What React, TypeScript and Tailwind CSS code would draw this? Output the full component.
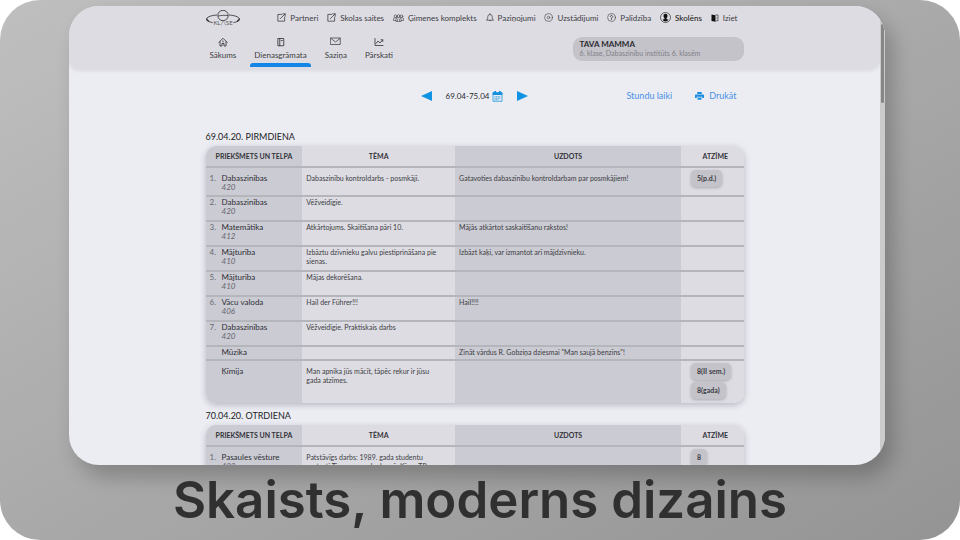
import type { ReactNode } from "react";

const stroke = {
  fill: "none",
  stroke: "currentColor",
  strokeLinecap: "round" as const,
  strokeLinejoin: "round" as const,
};

function ExternalIcon() {
  return (
    <svg viewBox="0 0 16 16" className="size-[9px]" strokeWidth="1.4" {...stroke}>
      <path d="M8 2.5H1.5v12h12V8M6 10l8.5-8.5M10 1.5h4.5V6" />
    </svg>
  );
}

function FamilyIcon() {
  return (
    <svg viewBox="0 0 22 16" className="h-2 w-[11px]" strokeWidth="1.2" {...stroke}>
      <circle cx="5" cy="4.5" r="2.6" />
      <circle cx="11" cy="4" r="2.8" />
      <circle cx="17" cy="4.5" r="2.6" />
      <path d="M6 14.5V11q0-3.500 3-3.500h4q3 0 3 3.500v3.500zM5.500 13H1v-3q0-2.500 2.500-2.500h3M16.500 13H21v-3q0-2.500-2.500-2.500h-3M9 11v3M13 11v3" />
    </svg>
  );
}

function BellIcon() {
  return (
    <svg viewBox="0 0 16 18" className="h-[9px] w-2" strokeWidth="1.4" {...stroke}>
      <path d="M1.500 14q2-1.500 2-4V7.500a4.500 4.500 0 0 1 9 0V10q0 2.500 2 4zM6.500 14.500a1.600 1.600 0 0 0 3 0M8 1.200V3" />
    </svg>
  );
}

function SettingsIcon() {
  return (
    <svg viewBox="0 0 18 18" className="size-[9px]" strokeWidth="1.2" {...stroke}>
      <circle cx="9" cy="9" r="7.800" />
      <circle cx="9" cy="9" r="2.500" />
    </svg>
  );
}

function HelpIcon() {
  return (
    <svg viewBox="0 0 18 18" className="size-[9px]" strokeWidth="1.200" {...stroke}>
      <circle cx="9" cy="9" r="7.800" />
      <path d="M6.800 7a2.200 2.200 0 1 1 3.500 1.800Q9 9.500 9 10.800M9 13v.3" strokeWidth="1.800" />
    </svg>
  );
}

function UserIcon() {
  return (
    <svg viewBox="0 0 22 22" className="size-[11px]">
      <circle cx="11" cy="11" r="10" fill="none" stroke="#111" strokeWidth="1.200" />
      <path
        d="M11 3.500c3 0 4.300 2 4 4.800-.2 1.900-1 3.200-2 4v1.500l4 1.800q-2.500 3.600-6 3.600t-6-3.600l4-1.800v-1.500c-1-.8-1.800-2.100-2-4-.3-2.800 1-4.800 4-4.800z"
        fill="#111"
      />
    </svg>
  );
}

function ExitIcon() {
  return (
    <svg viewBox="0 0 16 16" className="size-2">
      <path d="M1 1l8 1.500V15.500L1 14z" fill="#111" />
      <path d="M9 2h5v11.500H9M10.500 8h2" fill="none" stroke="#333" strokeWidth="1.400" />
    </svg>
  );
}

function HomeIcon() {
  return (
    <svg viewBox="0 0 20 20" className="size-[10px]" strokeWidth="1.800" {...stroke}>
      <path d="M1.500 11L10 2.500 18.500 11M4 9.500V18h4v-5h4v5h4V9.500M10 8v2" />
    </svg>
  );
}

function DiaryIcon() {
  return (
    <svg viewBox="0 0 20 20" className="size-[10px]" strokeWidth="1.800" {...stroke}>
      <path d="M4.500 3h11v14.500h-11zM7.500 3v14.500M10.500 7h2" />
    </svg>
  );
}

function MailIcon() {
  return (
    <svg viewBox="0 0 22 20" className="h-[10px] w-[11px]" strokeWidth="1.500" {...stroke}>
      <path d="M1.500 2h19v13h-19zM1.500 2.500L11 10l9.500-7.500" />
    </svg>
  );
}

function ChartIcon() {
  return (
    <svg viewBox="0 0 20 20" className="size-[10px]" strokeWidth="1.700" {...stroke}>
      <path d="M2 3v14h16M4 13l4-5 4 4 5-6M14 5.500h3.500V9" />
    </svg>
  );
}

function CalendarIcon() {
  return (
    <svg viewBox="0 0 22 22" className="size-[11px]">
      <path d="M2 3h18v17.500H2z" fill="none" stroke="#1490de" strokeWidth="1.500" />
      <path d="M1.500 3h19v5h-19zM4.500 0H8v4H4.500zM14 0h3.500v4H14z" fill="#1490de" />
      <path d="M5 11.500h12M5 14.500h12M5 17.500h8" stroke="#1490de" strokeWidth="1.600" strokeDasharray="2.200 1" />
    </svg>
  );
}

function PrinterIcon() {
  return (
    <svg viewBox="0 0 18 16" className="h-2 w-[9px]" fill="#1c8ee0">
      <path d="M4.500 0h9v4h-9zM1.500 5h15q1.500 0 1.500 1.500V12h-3.500V9.500h-11V12H0V6.500Q0 5 1.500 5zM5 11h8v4.500H5z" />
    </svg>
  );
}

function Logo() {
  return (
    <svg viewBox="0 0 34 16" className="h-4 w-[34px]" fill="none" stroke="#3c3c40">
      <circle cx="17" cy="5.500" r="5.200" strokeWidth=".9" />
      <path d="M12 6q5-1.200 10-.5" strokeWidth=".8" />
      <path d="M11 5C4 5.500 0 7.500.6 9.600c.3 1.300 2.600 2.400 6 3M23 5c7 .5 11 2.500 10.400 4.600-.3 1.300-2.600 2.400-6 3" strokeWidth=".9" />
      <path d="M1 8.500q-.6 1.600 2 2.800M33 8.500q.6 1.600-2 2.800" strokeWidth="1.400" />
      <text x="17" y="15.300" textAnchor="middle" fontSize="6" fill="#55555a" stroke="none">
        KL/\SE
      </text>
    </svg>
  );
}

const links: { label: string; icon: ReactNode; strong?: boolean }[] = [
  { label: "Partneri", icon: <ExternalIcon /> },
  { label: "Skolas saites", icon: <ExternalIcon /> },
  { label: "Ģimenes komplekts", icon: <FamilyIcon /> },
  { label: "Paziņojumi", icon: <BellIcon /> },
  { label: "Uzstādījumi", icon: <SettingsIcon /> },
  { label: "Palīdzība", icon: <HelpIcon /> },
  { label: "Skolēns", icon: <UserIcon />, strong: true },
  { label: "Iziet", icon: <ExitIcon /> },
];

const tabs: { label: string; icon: ReactNode; active?: boolean }[] = [
  { label: "Sākums", icon: <HomeIcon /> },
  { label: "Dienasgrāmata", icon: <DiaryIcon />, active: true },
  { label: "Saziņa", icon: <MailIcon /> },
  { label: "Pārskati", icon: <ChartIcon /> },
];

type Lesson = {
  no?: string;
  subject: string;
  room?: string;
  topic?: string;
  homework?: string;
  marks?: string[];
  size: "short" | "normal" | "tall" | "double";
};

const monday: Lesson[] = [
  { no: "1.", subject: "Dabaszinības", room: "420", topic: "Dabaszinību kontroldarbs - posmkāji.", homework: "Gatavoties dabaszinību kontroldarbam par posmkājiem!", marks: ["5(p.d.)"], size: "tall" },
  { no: "2.", subject: "Dabaszinības", room: "420", topic: "Vēžveidīgie.", size: "normal" },
  { no: "3.", subject: "Matemātika", room: "412", topic: "Atkārtojums. Skaitīšana pāri 10.", homework: "Mājās atkārtot saskaitīšanu rakstos!", size: "normal" },
  { no: "4.", subject: "Mājturība", room: "410", topic: "Izbāztu dzīvnieku galvu piestiprināšana pie sienas.", homework: "Izbāzt kaķi, var izmantot arī mājdzīvnieku.", size: "normal" },
  { no: "5.", subject: "Mājturība", room: "410", topic: "Mājas dekorēšana.", size: "normal" },
  { no: "6.", subject: "Vācu valoda", room: "406", topic: "Hail der Führer!!!", homework: "Hail!!!!", size: "normal" },
  { no: "7.", subject: "Dabaszinības", room: "420", topic: "Vēžveidīgie. Praktiskais darbs", size: "normal" },
  { subject: "Mūzika", homework: "Zināt vārdus R. Gobziņa dziesmai \"Man saujā benzīns\"!", size: "short" },
  { subject: "Ķīmija", topic: "Man apnika jūs mācīt, tāpēc rekur ir jūsu gada atzīmes.", marks: ["8(II sem.)", "8(gada)"], size: "double" },
];

const tuesday: Lesson[] = [
  { no: "1.", subject: "Pasaules vēsture", room: "402", topic: "Patstāvīgs darbs: 1989. gada studentu protesti Tjaņaņmeņa laukumā, Ķīnas TR.", marks: ["8"], size: "tall" },
];

const rowHeight = { short: "h-[14px]", normal: "h-[25px]", tall: "h-[29px]", double: "h-[43px]" };
const cellPad = { short: "pt-px", normal: "pt-px", tall: "pt-[6px]", double: "pt-[6px]" };

function Day({ title, lessons }: { title: string; lessons: Lesson[] }) {
  return (
    <section className="flex flex-col gap-1">
      <h2 className="text-[9px] leading-[10px] text-[#222226]">{title}</h2>
      <div className="overflow-hidden rounded-[10px] shadow-[0_2px_6px_rgba(60,60,80,0.3)]">
        <table className="w-full table-fixed border-collapse bg-[#dddce2] text-left">
          <colgroup>
            <col className="w-[18%] bg-[#cbcbd3]" />
            <col className="w-[28.400%]" />
            <col className="w-[42%] bg-[#cbcbd3]" />
            <col />
          </colgroup>
          <thead>
            <tr className="h-[21px] text-center text-[7px] leading-[9px] text-[#33333a]">
              <th className="font-bold">PRIEKŠMETS UN TELPA</th>
              <th className="font-bold">TĒMA</th>
              <th className="font-bold">UZDOTS</th>
              <th className="pl-[6px] font-bold">ATZĪME</th>
            </tr>
          </thead>
          <tbody className="text-[7px] leading-[9px] text-[#3c3c42]">
            {lessons.map((l, i) => (
              <tr key={i} className={`border-t-2 border-[#b5b5bc] align-top ${rowHeight[l.size]}`}>
                <td className={cellPad[l.size]}>
                  <div className="flex text-[8px] leading-[9px]">
                    <span className="w-4 shrink-0 pl-1 text-[#6a6a72]">{l.no}</span>
                    <div>
                      <div className="text-[#2e2e34]">{l.subject}</div>
                      {l.room && <div className="text-[#66666e] italic">{l.room}</div>}
                    </div>
                  </div>
                </td>
                <td className={`pr-[14px] pl-1 ${cellPad[l.size]}`}>{l.topic}</td>
                <td className={`px-1 ${cellPad[l.size]}`}>{l.homework}</td>
                <td className="pt-[2px] pl-[10px]">
                  {l.marks && (
                    <div className="flex flex-col items-start gap-[2px]">
                      {l.marks.map((m) => (
                        <span key={m} className="rounded-[5px] bg-[#c4c3ca] px-[6px] py-1 font-bold shadow-[0_1px_3px_rgba(60,60,80,0.3)]">
                          {m}
                        </span>
                      ))}
                    </div>
                  )}
                </td>
              </tr>
            ))}
          </tbody>
        </table>
      </div>
    </section>
  );
}

export default function App() {
  return (
    <div className="flex h-screen flex-col overflow-hidden rounded-[40px] bg-linear-to-br from-[#bfbfbf] to-[#949494] pt-[6px]">
      <div className="mr-[75px] ml-[69px] flex min-h-0 flex-1 overflow-hidden rounded-[30px] bg-[#ecedf3] font-['Lato','Open_Sans',sans-serif] shadow-[8px_12px_20px_rgba(0,0,0,0.22)]">
        <div className="min-w-0 flex-1">
          <header className="rounded-b-[10px] bg-[#dddce2] pb-[2px] shadow-[0_1px_4px_rgba(60,60,80,0.15)]">
            <div className="mx-auto max-w-[538px]">
              <div className="flex h-[23px] items-center justify-between pr-[6px]">
                <a href="#" aria-label="E-klase" className="mr-[29px]">
                  <Logo />
                </a>
                {links.map((l) => (
                  <a
                    key={l.label}
                    href="#"
                    className={`flex items-center gap-1 text-[8px] leading-[10px] whitespace-nowrap ${l.strong ? "font-medium text-[#1c1c20]" : "text-[#3c3c42]"}`}
                  >
                    {l.icon}
                    {l.label}
                  </a>
                ))}
              </div>
              <div className="flex justify-between">
                <nav className="flex gap-[10px] text-[8px] leading-[10px] text-[#3c3c42]">
                  {tabs.map((t) => (
                    <a key={t.label} href="#" className="flex flex-col items-center pt-2">
                      {t.icon}
                      <span className="px-1 pt-[3px] pb-[3px]">{t.label}</span>
                      <span className={`h-1 w-full rounded-t-[3px] ${t.active ? "bg-[#1285e6]" : ""}`} />
                    </a>
                  ))}
                </nav>
                <button type="button" className="mt-2 mb-[6px] w-[171px] rounded-[9px] bg-[#c4c3ca] px-[7px] text-left text-[7px] leading-[9px] text-[#808088]">
                  <span className="block text-[8px] font-bold text-[#2a2a30]">TAVA MAMMA</span>
                  <span className="block">6. klase, Dabaszinību institūts 6. klasēm</span>
                </button>
              </div>
            </div>
          </header>
          <main className="mx-auto max-w-[538px] pt-[21px]">
            <div className="grid grid-cols-[1fr_auto_1fr] items-center pb-[30px]">
              <div className="col-start-2 flex items-center gap-[14px]">
                <button type="button" aria-label="Iepriekšējā nedēļa" className="text-[#0f93e2]">
                  <svg viewBox="0 0 11 10" className="h-[10px] w-[11px]" fill="currentColor">
                    <path d="M0 5L11 0v10z" />
                  </svg>
                </button>
                <button type="button" className="flex items-center gap-[3px] text-[8px] leading-[12px] text-[#2a2a30]">
                  69.04-75.04
                  <CalendarIcon />
                </button>
                <button type="button" aria-label="Nākamā nedēļa" className="text-[#0f93e2]">
                  <svg viewBox="0 0 11 10" className="h-[10px] w-[11px]" fill="currentColor">
                    <path d="M11 5L0 0v10z" />
                  </svg>
                </button>
              </div>
              <div className="flex items-center justify-end gap-[23px] pr-[7px] text-[9px] leading-[12px] text-[#4a90e6]">
                <a href="#">Stundu laiki</a>
                <button type="button" className="flex items-center gap-[5px]">
                  <PrinterIcon />
                  Drukāt
                </button>
              </div>
            </div>
            <div className="flex flex-col gap-2">
              <Day title="69.04.20. PIRMDIENA" lessons={monday} />
              <Day title="70.04.20. OTRDIENA" lessons={tuesday} />
            </div>
          </main>
        </div>
        <div className="w-[5px] shrink-0 bg-[#cbcbcb] pt-[18px]">
          <div className="mx-px h-[79px] rounded-full bg-[#858688]" />
        </div>
      </div>
      <h1 className="h-[75px] shrink-0 text-center font-['Inter',sans-serif] text-[51px] leading-[70px] font-semibold text-[#303030]">
        Skaists, moderns dizains
      </h1>
    </div>
  );
}
